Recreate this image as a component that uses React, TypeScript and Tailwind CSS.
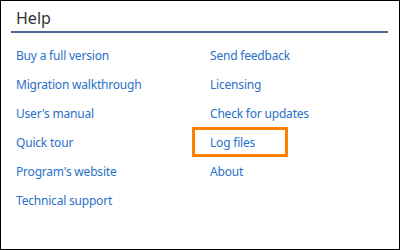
export default function App() {
  const left = ['Buy a full version', 'Migration walkthrough', "User's manual", 'Quick tour', "Program's website", 'Technical support']
  const right = ['Send feedback', 'Licensing', 'Check for updates', 'Log files', 'About']

  return (
    <div className="w-[400px] h-[250px] bg-white border border-black px-[10px] pt-[6px]" style={{ fontFamily: '"Noto Sans", "Open Sans", sans-serif' }}>
      <div className="pl-[5px] text-[16px] leading-[22px] text-[#333333]">Help</div>
      <div className="mt-[2px] h-[2px] w-[377px] bg-[#4a6894]" />
      <div className="grid grid-cols-[194px_1fr] mt-[8px] text-[12px] tracking-[-0.2px] text-[#2a70c8]">
        <div className="flex flex-col pl-[5px]">
          {left.map((t) => (
            <div key={t} className="h-[29px] pt-[1px] flex items-center">{t}</div>
          ))}
        </div>
        <div className="flex flex-col pl-[5px]">
          {right.map((t) => (
            <div key={t} className="h-[29px] pt-[1px] flex items-center">
              {t === 'Log files' ? (
                <span className="relative">
                  {t}
                  <span className="absolute left-[-18px] top-[-7px] w-[96px] h-[30px] border-[3px] border-[#ff8000]" />
                </span>
              ) : (
                t
              )}
            </div>
          ))}
        </div>
      </div>
    </div>
  )
}
